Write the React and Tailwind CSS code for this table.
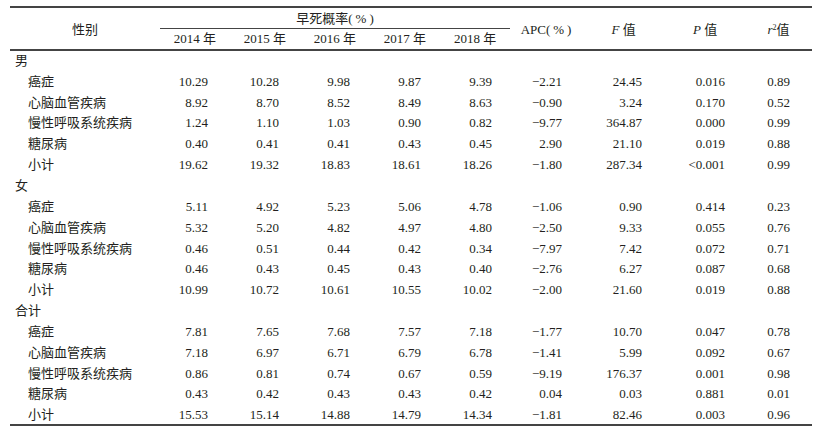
const groups = [
  {
    name: '男',
    rows: [
      ['癌症', '10.29', '10.28', '9.98', '9.87', '9.39', '−2.21', '24.45', '0.016', '0.89'],
      ['心脑血管疾病', '8.92', '8.70', '8.52', '8.49', '8.63', '−0.90', '3.24', '0.170', '0.52'],
      ['慢性呼吸系统疾病', '1.24', '1.10', '1.03', '0.90', '0.82', '−9.77', '364.87', '0.000', '0.99'],
      ['糖尿病', '0.40', '0.41', '0.41', '0.43', '0.45', '2.90', '21.10', '0.019', '0.88'],
      ['小计', '19.62', '19.32', '18.83', '18.61', '18.26', '−1.80', '287.34', '<0.001', '0.99'],
    ],
  },
  {
    name: '女',
    rows: [
      ['癌症', '5.11', '4.92', '5.23', '5.06', '4.78', '−1.06', '0.90', '0.414', '0.23'],
      ['心脑血管疾病', '5.32', '5.20', '4.82', '4.97', '4.80', '−2.50', '9.33', '0.055', '0.76'],
      ['慢性呼吸系统疾病', '0.46', '0.51', '0.44', '0.42', '0.34', '−7.97', '7.42', '0.072', '0.71'],
      ['糖尿病', '0.46', '0.43', '0.45', '0.43', '0.40', '−2.76', '6.27', '0.087', '0.68'],
      ['小计', '10.99', '10.72', '10.61', '10.55', '10.02', '−2.00', '21.60', '0.019', '0.88'],
    ],
  },
  {
    name: '合计',
    rows: [
      ['癌症', '7.81', '7.65', '7.68', '7.57', '7.18', '−1.77', '10.70', '0.047', '0.78'],
      ['心脑血管疾病', '7.18', '6.97', '6.71', '6.79', '6.78', '−1.41', '5.99', '0.092', '0.67'],
      ['慢性呼吸系统疾病', '0.86', '0.81', '0.74', '0.67', '0.59', '−9.19', '176.37', '0.001', '0.98'],
      ['糖尿病', '0.43', '0.42', '0.43', '0.43', '0.42', '0.04', '0.03', '0.881', '0.01'],
      ['小计', '15.53', '15.14', '14.88', '14.79', '14.34', '−1.81', '82.46', '0.003', '0.96'],
    ],
  },
];

const widths = ['w-[150px]', 'w-[70px]', 'w-[70px]', 'w-[70px]', 'w-[70px]', 'w-[70px]', 'w-[72px]', 'w-[83px]', 'w-[80px]', 'w-[67px]'];
const pads = ['', 'pr-[22px]', 'pr-[21px]', 'pr-[20px]', 'pr-[19px]', 'pr-[18px]', 'pr-[20px]', 'pr-[23px]', 'pr-[20px]', 'pr-[22px]'];

const Pct = () => (
  <>
    (<span className="mx-[3px]">%</span>)
  </>
);

export default function App() {
  return (
    <div className="w-[821px] h-[438px] bg-white pl-[10px] pt-[6px] text-[13px] leading-none text-[#231f20] font-['Liberation_Serif','Noto_Sans_CJK_SC',serif]">
      <table className="table-fixed border-collapse w-[802px]">
        <colgroup>
          {widths.map((w, i) => (
            <col key={i} className={w} />
          ))}
        </colgroup>
        <thead>
          <tr className="h-[21px] border-t-2 border-[#444]">
            <th rowSpan={2} className="font-normal text-center align-middle pt-[2px]">性别</th>
            <th colSpan={5} className="font-normal text-center border-b border-[#444] pt-[2px]">早死概率<Pct /></th>
            <th rowSpan={2} className="font-normal text-center pt-[2px]">APC<Pct /></th>
            <th rowSpan={2} className="font-normal text-center pt-[2px]"><i>F</i> 值</th>
            <th rowSpan={2} className="font-normal text-center pt-[2px]"><i>P</i> 值</th>
            <th rowSpan={2} className="font-normal text-center pt-[2px]">
              <i>r</i><sup className="text-[8px]">2</sup>值
            </th>
          </tr>
          <tr className="h-[22px] border-b-2 border-[#444]">
            {['2014', '2015', '2016', '2017', '2018'].map((y) => (
              <th key={y} className="font-normal text-center">{y} 年</th>
            ))}
          </tr>
        </thead>
        <tbody className="border-b-2 border-[#444]">
          {groups.map((g) => (
            <>
              <tr key={g.name} className="h-[20.85px]">
                <td colSpan={10} className="pl-[5px] text-left">{g.name}</td>
              </tr>
              {g.rows.map((r) => (
                <tr key={g.name + r[0]} className="h-[20.85px]">
                  {r.map((c, i) =>
                    i === 0 ? (
                      <td key={i} className="pl-[18px] text-left whitespace-nowrap">{c}</td>
                    ) : (
                      <td key={i} className={`text-right ${pads[i]}`}>{c}</td>
                    )
                  )}
                </tr>
              ))}
            </>
          ))}
        </tbody>
      </table>
    </div>
  );
}
